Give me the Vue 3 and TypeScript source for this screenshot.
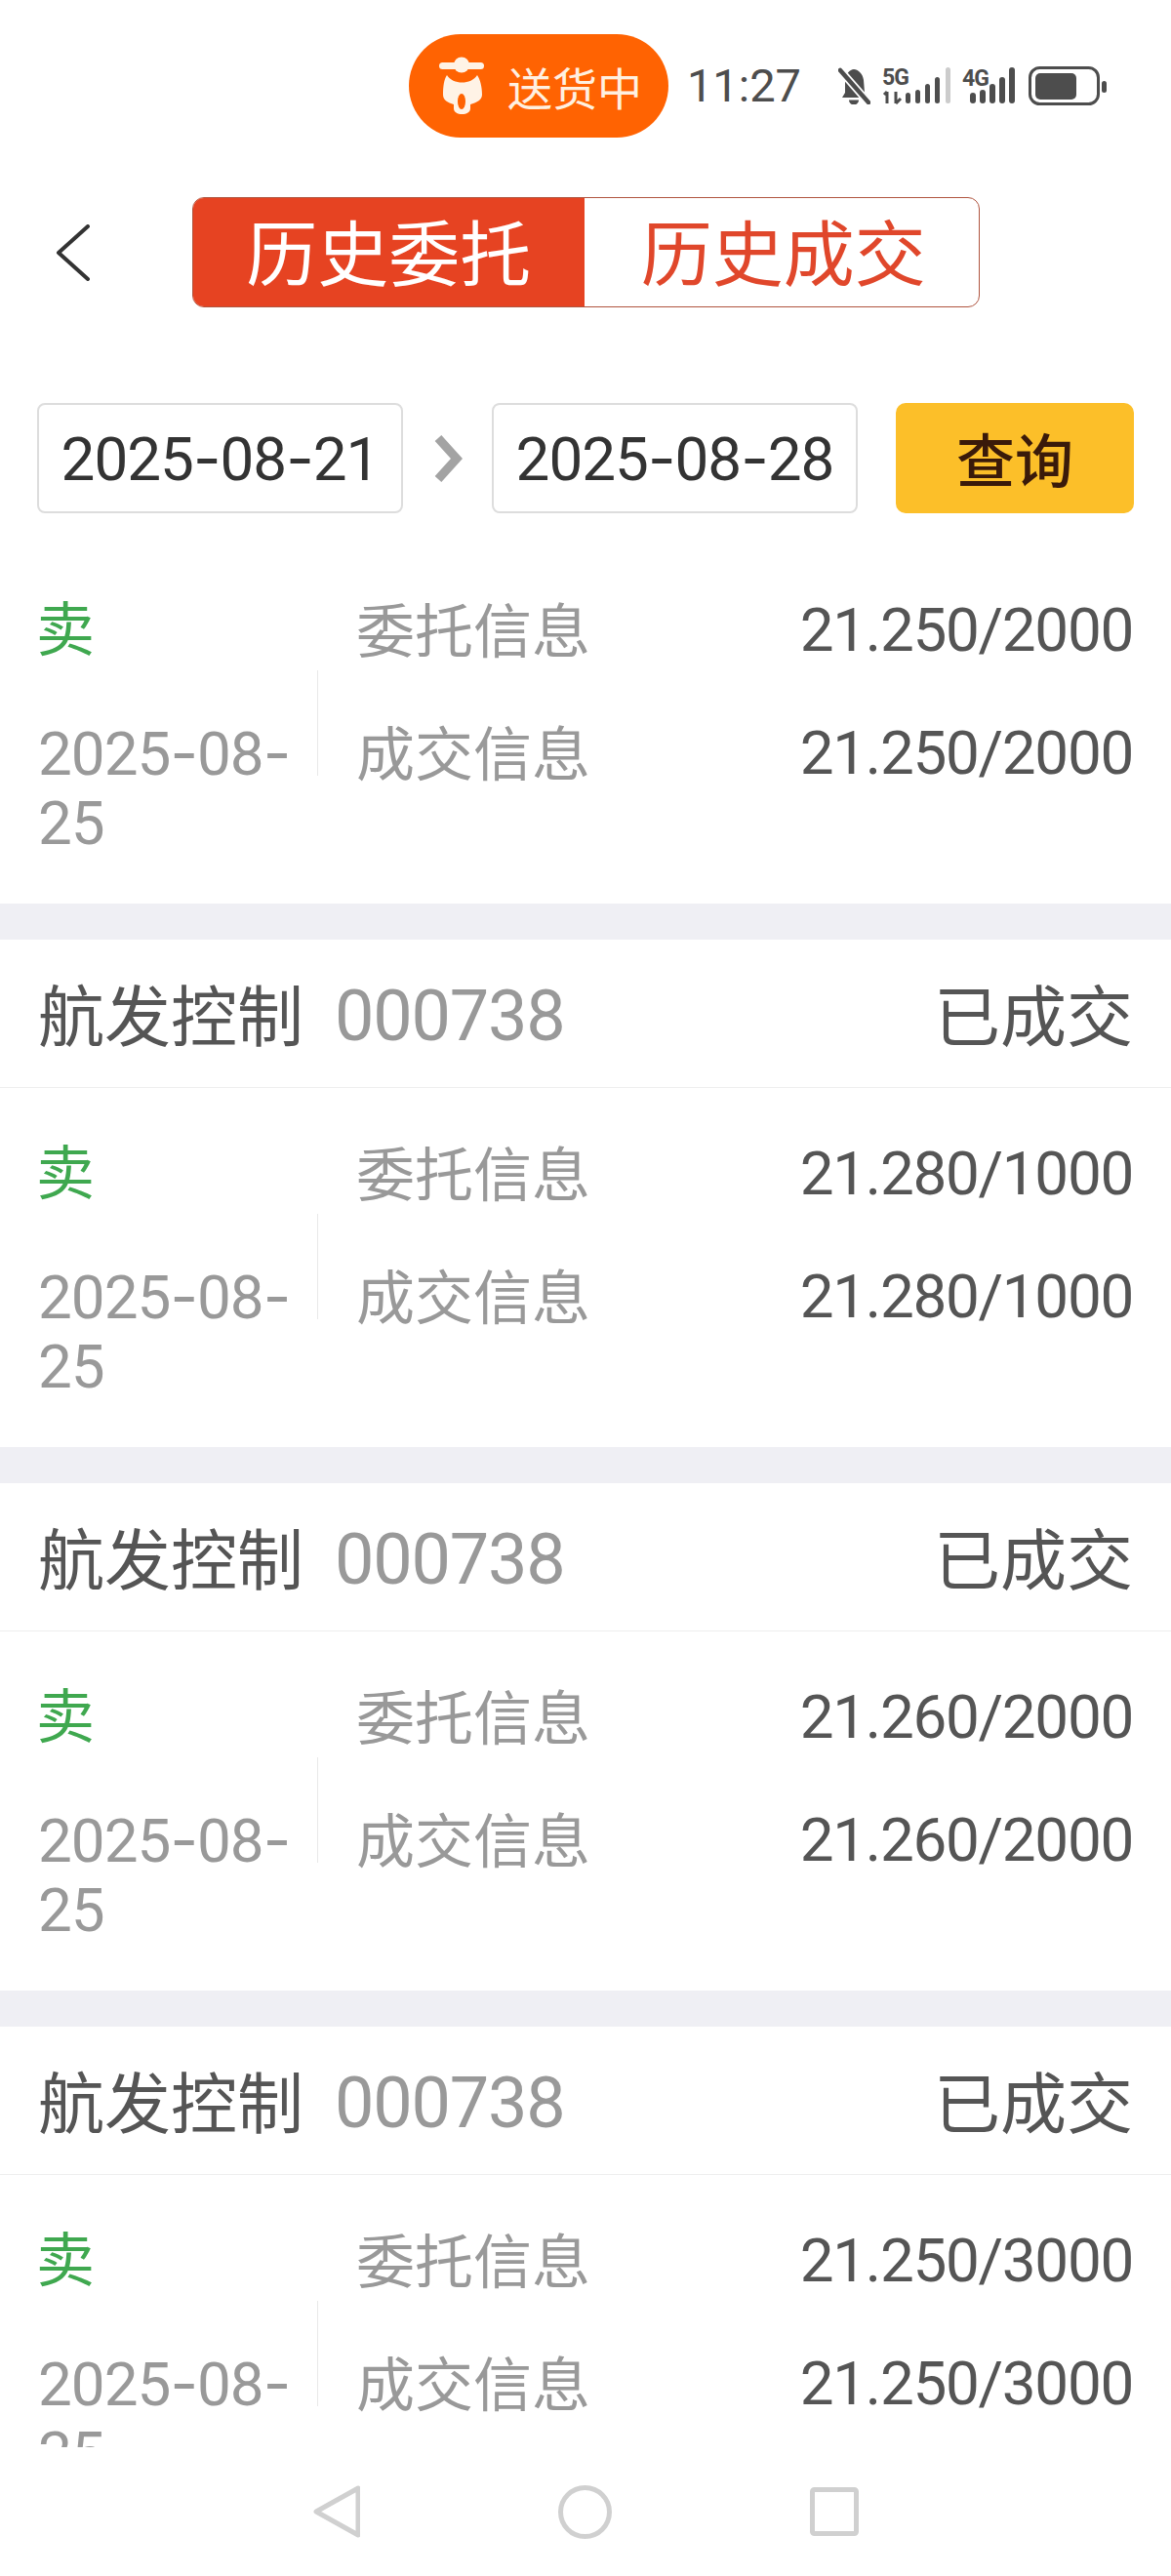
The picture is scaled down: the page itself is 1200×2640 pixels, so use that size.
<script setup lang="ts">
interface Order {
  id: number
  price: string
  showHead: boolean
}

const orders: Order[] = [
  { id: 1, price: '21.250/2000', showHead: false },
  { id: 2, price: '21.280/1000', showHead: true },
  { id: 3, price: '21.260/2000', showHead: true },
  { id: 4, price: '21.250/3000', showHead: true },
]

const barsA = [
  { x: 1, y: 26, h: 11, c: '#4d4d4d' },
  { x: 11, y: 23, h: 14, c: '#4d4d4d' },
  { x: 21, y: 17, h: 20, c: '#4d4d4d' },
  { x: 31, y: 10, h: 27, c: '#4d4d4d' },
  { x: 42, y: 0, h: 37, c: '#cccccc' },
]
const barsB = [
  { x: 0, y: 26, h: 11 },
  { x: 10, y: 23, h: 14 },
  { x: 20, y: 17, h: 20 },
  { x: 30, y: 10, h: 27 },
  { x: 40, y: 0, h: 37 },
]
</script>

<template>
  <div class="page">
    <div class="status">
      <div class="pill">
        <svg class="scooter" viewBox="450 56 50 66" width="50" height="66">
          <rect x="450" y="65" width="46" height="7" rx="3.5" fill="#fff3e6" />
          <circle cx="473" cy="67.5" r="8" fill="#fff3e6" />
          <path d="M458 78C464 88 483 88 489 78C492 82 494 90 494 98C494 104 488 106 482 108L482 112C482 116 478 118 473.5 118C469 118 465 116 465 112L465 108C459 106 454 104 454 98C454 90 455 82 458 78Z" fill="#fff3e6" />
          <ellipse cx="473" cy="105" rx="4" ry="8" fill="#ff6302" />
        </svg>
        <span class="pill-text">送货中</span>
      </div>
      <span class="time">11:27</span>
      <div class="icons">
        <svg viewBox="0 0 33 38" width="33" height="38">
          <path d="M16 2C20 2 25 6 26 13L27 26L31 31L4 31L7 26L7 14C7 7 12 2 16 2Z" fill="#4d4d4d" />
          <path d="M11 33.500A5 5 0 0 0 21 33.500Z" fill="#4d4d4d" />
          <path d="M2 3L31 36" stroke="#fff" stroke-width="8" />
          <path d="M2 3L31 36" stroke="#4d4d4d" stroke-width="4.500" stroke-linecap="round" />
        </svg>
        <svg viewBox="0 0 70 38" width="70" height="38">
          <text x="0" y="18" class="net">5G</text>
          <path d="M5 25V37M2 28L5 25M14 25V37M14 37L19 32" stroke="#4d4d4d" stroke-width="3" fill="none" />
          <g transform="translate(23 0)">
            <rect v-for="b in barsA" :key="b.x" :x="b.x" :y="b.y" width="5" :height="b.h" rx="2.500" :fill="b.c" />
          </g>
        </svg>
        <svg viewBox="0 0 56 38" width="56" height="38">
          <text x="0" y="19" class="net">4G</text>
          <g transform="translate(8 0)">
            <rect v-for="b in barsB" :key="b.x" :x="b.x" :y="b.y" width="6" :height="b.h" rx="3" fill="#4d4d4d" />
          </g>
        </svg>
        <svg viewBox="0 0 80 40" width="80" height="40">
          <rect x="1.500" y="1.500" width="70" height="37" rx="10" fill="none" stroke="#4d4d4d" stroke-width="3" />
          <rect x="7" y="7" width="42" height="27" rx="5" fill="#4d4d4d" />
          <rect x="75" y="15" width="5" height="12" rx="2.500" fill="#4d4d4d" />
        </svg>
      </div>
    </div>

    <div class="topbar">
      <svg class="back" viewBox="0 0 36 58" width="36" height="58">
        <path d="M33 2L3 29L33 56" fill="none" stroke="#333" stroke-width="4" stroke-linecap="round" stroke-linejoin="round" />
      </svg>
      <div class="tabs">
        <div class="tab active">历史委托</div>
        <div class="tab">历史成交</div>
      </div>
    </div>

    <div class="filter">
      <div class="date-input"><span>2025<span class="hy">-</span>08<span class="hy">-</span>21</span></div>
      <svg class="arrow" viewBox="0 0 30 48" width="30" height="48">
        <path d="M5 3L24 24L5 45" fill="none" stroke="#a3a3a3" stroke-width="9" />
      </svg>
      <div class="date-input"><span>2025<span class="hy">-</span>08<span class="hy">-</span>28</span></div>
      <div class="query">查询</div>
    </div>

    <div class="list">
      <section v-for="o in orders" :key="o.id" class="card">
        <header v-if="o.showHead" class="head">
          <span class="name">航发控制</span>
          <span class="code">000738</span>
          <span class="state">已成交</span>
        </header>
        <div class="body">
          <div class="side">
            <div class="dir">卖</div>
            <div class="date">2025<span class="hy">-</span>08<span class="hy">-</span><wbr />25</div>
          </div>
          <div class="info">
            <div class="row"><span class="label">委托信息</span><span class="value">{{ o.price }}</span></div>
            <div class="row"><span class="label">成交信息</span><span class="value">{{ o.price }}</span></div>
          </div>
        </div>
      </section>
    </div>

    <nav class="navbar">
      <svg viewBox="0 0 48 54" width="48" height="54">
        <path d="M46 3V51L3 27Z" fill="none" stroke="#d0d0d0" stroke-width="5" stroke-linejoin="round" />
      </svg>
      <svg viewBox="0 0 55 55" width="55" height="55">
        <circle cx="27.500" cy="27.500" r="25" fill="none" stroke="#d0d0d0" stroke-width="5" />
      </svg>
      <svg viewBox="0 0 50 50" width="50" height="50">
        <rect x="2.500" y="2.500" width="45" height="45" rx="2" fill="none" stroke="#d0d0d0" stroke-width="5" />
      </svg>
    </nav>
  </div>
</template>

<style scoped>
.page {
  width: 1200px;
  height: 2640px;
  overflow: hidden;
  background: #fff;
  font-family: Roboto, "Noto Sans CJK SC", sans-serif;
}
.hy {
  font-family: Inter, sans-serif;
}
.status {
  height: 143px;
  padding: 35px 66px 0 0;
  box-sizing: border-box;
  display: flex;
  justify-content: flex-end;
  align-items: flex-start;
}
.pill {
  width: 266px;
  height: 106px;
  border-radius: 53px;
  background: #ff6302;
  display: flex;
  align-items: center;
  padding-left: 31px;
  box-sizing: border-box;
}
.scooter {
  margin-right: 20px;
}
.pill-text {
  font-size: 46px;
  color: #fff0e0;
}
.time {
  margin-left: 19px;
  font-size: 47px;
  color: #4d4d4d;
  line-height: 106px;
}
.icons {
  margin-left: 38px;
  height: 106px;
  display: flex;
  align-items: center;
  gap: 12px;
}
.net {
  font-family: Roboto, sans-serif;
  font-weight: 700;
  font-size: 23px;
  letter-spacing: -1px;
  fill: #4d4d4d;
}
.topbar {
  margin-top: 59px;
  height: 113px;
  display: flex;
  align-items: center;
  padding-left: 57px;
}
.back {
  margin-right: 104px;
}
.tabs {
  width: 807px;
  height: 113px;
  box-sizing: border-box;
  border: 1px solid #b0553f;
  border-radius: 12px;
  display: flex;
  overflow: hidden;
}
.tab {
  flex: 1;
  display: flex;
  align-items: center;
  justify-content: center;
  padding: 0 0 8px 4px;
  font-size: 73px;
  color: #e0472b;
}
.tab.active {
  background: #e64322;
  color: #fff;
  padding-left: 0;
}
.filter {
  margin-top: 98px;
  height: 113px;
  display: flex;
  align-items: center;
  padding-left: 38px;
}
.date-input {
  width: 375px;
  height: 113px;
  box-sizing: border-box;
  border: 2px solid #dddddd;
  border-radius: 8px;
  display: flex;
  align-items: center;
  justify-content: center;
  font-size: 62px;
  letter-spacing: -1px;
  color: #333;
}
.arrow {
  margin: 0 30px 0 31px;
}
.query {
  margin-left: 39px;
  width: 244px;
  height: 113px;
  padding-bottom: 2px;
  box-sizing: border-box;
  border-radius: 10px;
  background: #fcbf29;
  display: flex;
  align-items: center;
  justify-content: center;
  font-size: 60px;
  font-weight: 500;
  color: #3a1a0a;
}
.list {
  margin-top: 32px;
  height: 1950px;
  overflow: hidden;
}
.card {
  border-bottom: 37px solid #efeff4;
}
.head {
  height: 152px;
  box-sizing: border-box;
  border-bottom: 1px solid #eeeeee;
  padding: 0 39px;
  display: flex;
  align-items: center;
  font-size: 68px;
  color: #555;
}
.name,
.state {
  padding-bottom: 3px;
}
.code {
  margin-left: 32px;
  font-size: 72px;
  letter-spacing: -1.2px;
  padding-top: 5px;
  color: #999;
}
.state {
  margin-left: auto;
}
.body {
  height: 368px;
  box-sizing: border-box;
  padding: 24px 39px 0;
  display: flex;
}
.side {
  width: 286px;
  flex: none;
}
.dir {
  height: 126px;
  line-height: 126px;
  padding-top: 2px;
  margin-left: -2px;
  box-sizing: border-box;
  font-size: 60px;
  color: #3fa84f;
}
.date {
  width: 280px;
  font-size: 62px;
  letter-spacing: -1px;
  line-height: 71px;
  padding-top: 28px;
  color: #999;
}
.info {
  flex: 1;
  position: relative;
  padding-left: 40px;
}
.info::before {
  content: "";
  position: absolute;
  left: 0;
  top: 105px;
  width: 1px;
  height: 108px;
  background: #e8e8e8;
}
.row {
  height: 126px;
  display: flex;
  align-items: center;
  justify-content: space-between;
}
.label {
  font-size: 60px;
  padding-bottom: 5px;
  color: #999;
}
.value {
  font-size: 62px;
  letter-spacing: -1.3px;
  color: #555;
}
.navbar {
  height: 132px;
  display: flex;
  align-items: center;
  padding-left: 321px;
  gap: 203px;
}
</style>
